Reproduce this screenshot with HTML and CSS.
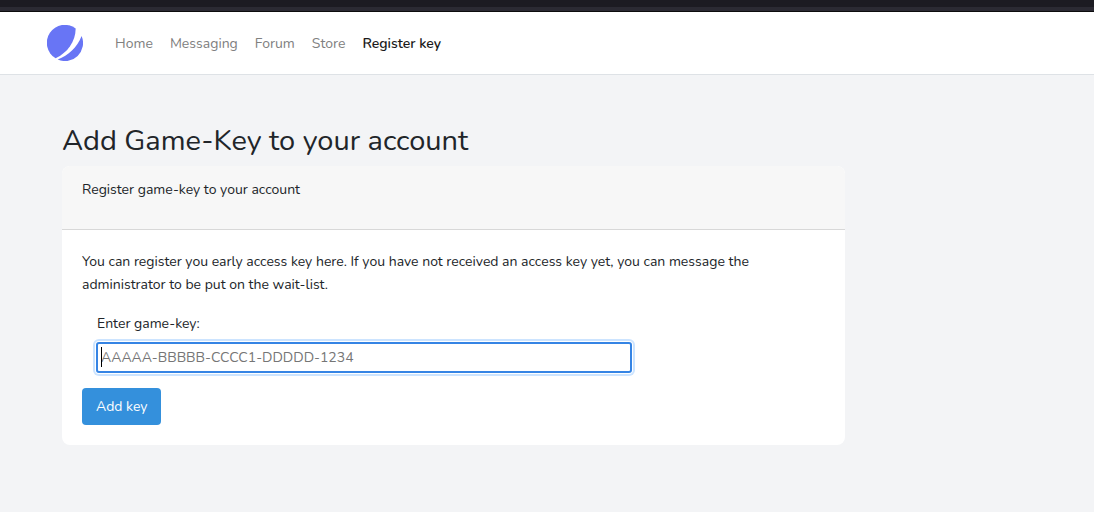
FILE: index.html
```html
<!DOCTYPE html>
<html lang="en">
<head>
<meta charset="utf-8">
<meta name="viewport" content="width=device-width, initial-scale=1">
<title>Register key</title>
<link rel="stylesheet" href="styles.css">
</head>
<body>
<div class="window-edge"></div>
<header class="navbar">
  <a class="brand" href="#" aria-label="Home page">
    <svg class="logo" viewBox="0 0 36 36" aria-hidden="true">
      <path d="M28.700 3.500A18 18 0 1 0 8.600 33.300C20.500 27.500 28.400 17 28.700 3.500Z"/>
      <path d="M34.600 11A18 18 0 0 1 10.700 34.500C21.500 30.500 30 22.500 34.600 11Z"/>
    </svg>
  </a>
  <nav class="nav">
    <a class="nav-link" href="#">Home</a>
    <a class="nav-link" href="#">Messaging</a>
    <a class="nav-link" href="#">Forum</a>
    <a class="nav-link" href="#">Store</a>
    <a class="nav-link active" href="#" aria-current="page">Register key</a>
  </nav>
</header>
<main class="content">
  <h1 class="title">Add Game-Key to your account</h1>
  <section class="card">
    <div class="card-header">Register game-key to your account</div>
    <form class="card-body">
      <p class="intro">You can register you early access key here. If you have not received an access key yet, you can message the administrator to be put on the wait-list.</p>
      <div class="field">
        <label class="label" for="game-key">Enter game-key:</label>
        <div class="input-wrap">
          <input class="key-input" id="game-key" type="text" placeholder="AAAAA-BBBBB-CCCC1-DDDDD-1234">
        </div>
      </div>
      <button class="button" type="button">Add key</button>
    </form>
  </section>
</main>
</body>
</html>
```
FILE: styles.css
```css
* { box-sizing: border-box; }

body {
  margin: 0;
  min-height: 100vh;
  background: #f3f4f6;
  color: #212529;
  font-family: Nunito, "Open Sans", sans-serif;
  font-size: 14px;
  line-height: 23px;
}

.window-edge {
  height: 12px;
  background: linear-gradient(#1c1b22 7px, #2b2a33 7px, #2b2a33 11px, #0c0c0d 11px);
}

.navbar {
  display: flex;
  align-items: center;
  gap: 32px;
  height: 63px;
  padding: 0 47px;
  background: #fff;
  border-bottom: 1px solid #dee2e6;
}

.brand { display: flex; }
.logo { width: 36px; height: 36px; fill: #6875f5; }
.nav { display: flex; gap: 17px; }
.nav-link { color: #808080; text-decoration: none; }
.nav-link.active { color: #1a1a1a; font-weight: 600; }

.content {
  max-width: 907px;
  padding: 48px 62px;
}

.title {
  margin: 0 0 7px;
  font-size: 29px;
  font-weight: 400;
  line-height: 36px;
}

.card {
  background: #fff;
  border-radius: 8px;
  overflow: hidden;
}

.card-header {
  padding: 12px 20px 28px;
  background: #f7f7f7;
  border-bottom: 1px solid #d8d8d8;
}

.card-body { padding: 20px; }
.intro { margin: 0 0 16px; }
.field { padding: 0 14px; margin-bottom: 15px; }
.label { display: block; margin-bottom: 7px; padding: 0 1px; }

.input-wrap {
  position: relative;
  width: 75%;
}

.input-wrap::before {
  content: "";
  position: absolute;
  top: 5px;
  left: 5px;
  width: 1px;
  height: 20px;
  background: #000;
}

.key-input {
  display: block;
  width: 100%;
  height: 31px;
  padding: 0 3px;
  border: 2px solid #3584e4;
  border-radius: 3px;
  outline: none;
  box-shadow: 0 0 0 1px #fff, 0 0 0 3px #cce4ff;
  font: inherit;
  color: #212529;
}

.key-input::placeholder { color: #757575; opacity: 1; }

.button {
  display: block;
  height: 37px;
  padding: 0 14px;
  border: 0;
  border-radius: 4px;
  background: #3490dc;
  color: #fff;
  font: inherit;
}
```
